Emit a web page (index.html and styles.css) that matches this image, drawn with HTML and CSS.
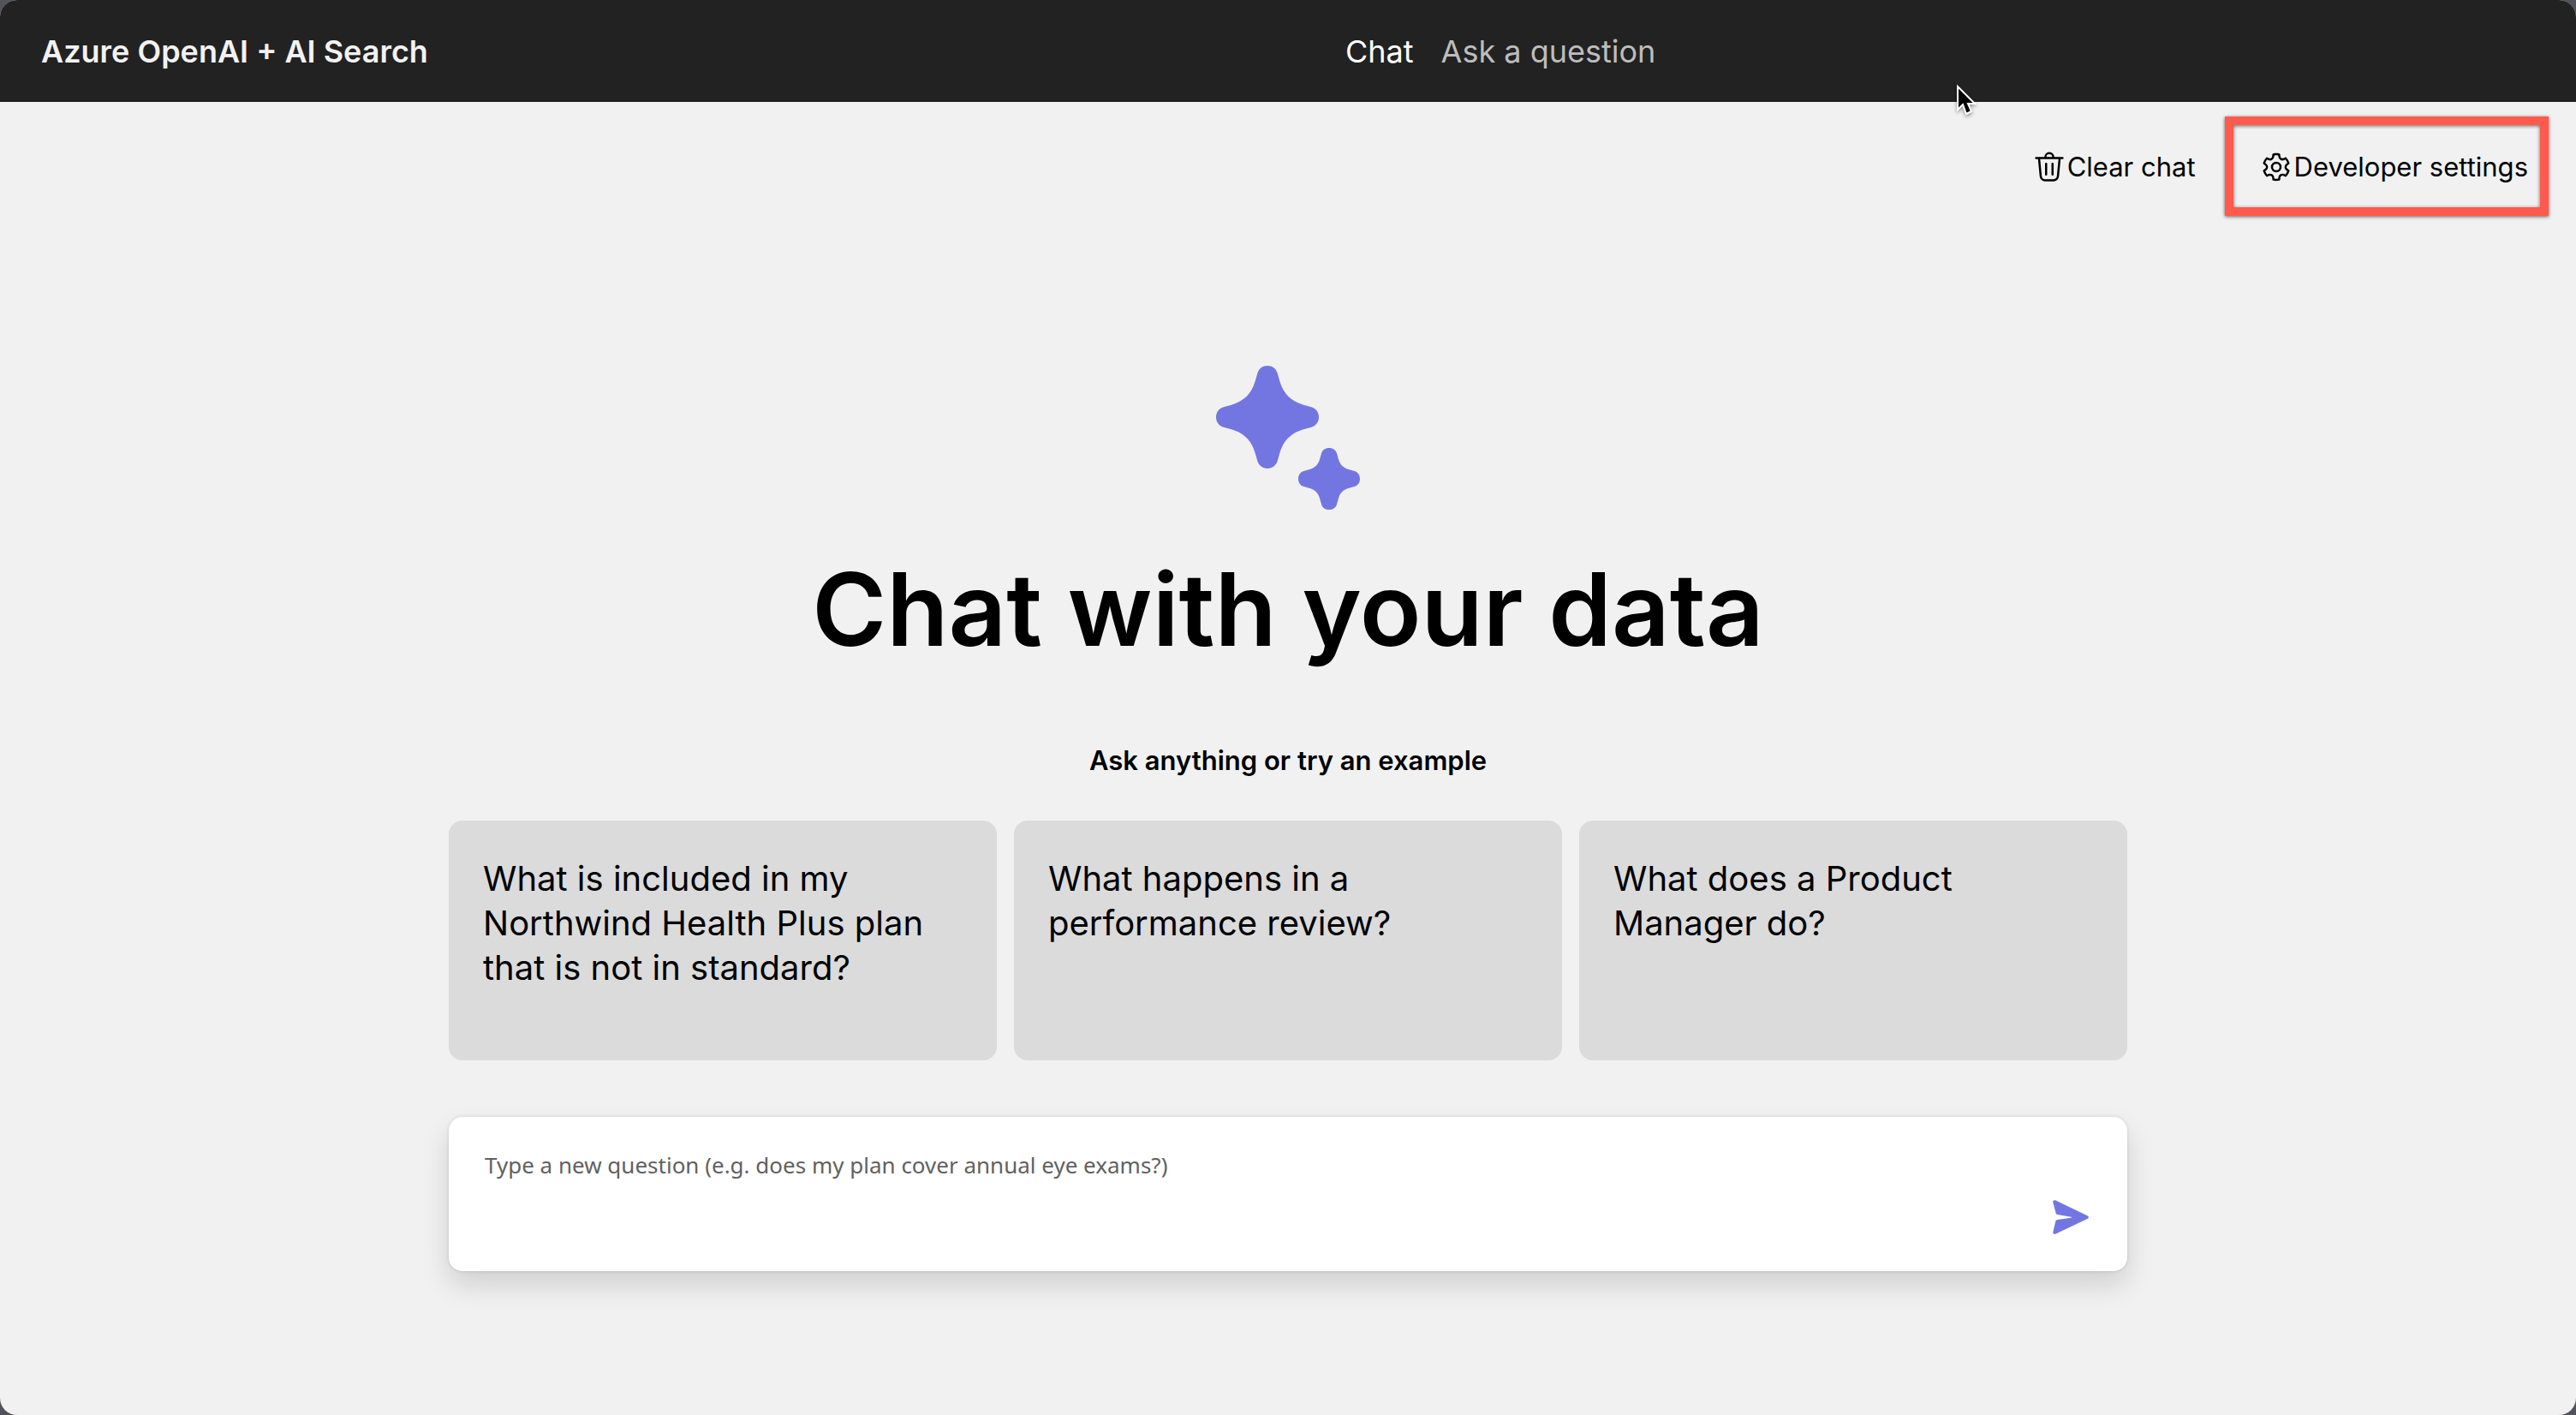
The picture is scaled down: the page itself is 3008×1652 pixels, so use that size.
FILE: index.html
```html
<!DOCTYPE html>
<html lang="en">
<head>
<meta charset="utf-8">
<meta name="viewport" content="width=device-width, initial-scale=1">
<title>Azure OpenAI + AI Search</title>
<link rel="stylesheet" href="styles.css">
</head>
<body>
<div class="window">
  <header class="header">
    <a class="header-title" href="#">Azure OpenAI + AI Search</a>
    <nav class="header-nav">
      <a class="nav-link nav-link-active" href="#chat">Chat</a>
      <a class="nav-link" href="#qa">Ask a question</a>
    </nav>
  </header>

  <div class="commands">
    <button class="command" type="button">
      <svg class="command-icon" viewBox="0 0 24 24" aria-hidden="true"><path d="M10 5h4a2 2 0 1 0-4 0ZM8.500 5a3.500 3.500 0 1 1 7 0h5.750a.75.75 0 0 1 0 1.500h-1.320l-1.170 12.110A3.750 3.750 0 0 1 15.030 22H8.970a3.750 3.750 0 0 1-3.730-3.390L4.070 6.500H2.750a.75.75 0 0 1 0-1.500H8.500Zm2 4.750a.75.75 0 0 0-1.500 0v7.500a.75.75 0 0 0 1.500 0v-7.500ZM14.250 9c.41 0 .75.34.75.75v7.500a.75.75 0 0 1-1.500 0v-7.500c0-.41.34-.75.75-.75Zm-7.520 9.470a2.250 2.250 0 0 0 2.240 2.030h6.060c1.150 0 2.120-.88 2.240-2.030L18.420 6.500H5.580l1.150 11.970Z"/></svg>
      <span>Clear chat</span>
    </button>
    <button class="command command-highlighted" type="button">
      <svg class="command-icon" viewBox="0 0 24 24" aria-hidden="true"><path d="M12.010 2.250c.74 0 1.470.1 2.180.25.3.07.53.33.56.65l.17 1.530a1.380 1.380 0 0 0 1.920 1.110l1.400-.61c.3-.13.64-.06.85.17a9.800 9.800 0 0 1 2.200 3.800c.1.3 0 .63-.26.82l-1.240.92a1.380 1.380 0 0 0 0 2.220l1.240.92c.26.19.36.52.27.82a9.800 9.800 0 0 1-2.200 3.800.75.75 0 0 1-.85.17l-1.400-.62a1.380 1.380 0 0 0-1.930 1.120l-.17 1.520a.75.75 0 0 1-.54.65 9.520 9.520 0 0 1-4.400 0 .75.75 0 0 1-.54-.65l-.17-1.520a1.380 1.380 0 0 0-1.930-1.110l-1.400.61a.75.75 0 0 1-.85-.17 9.800 9.800 0 0 1-2.200-3.800c-.1-.3 0-.63.26-.82l1.240-.92a1.380 1.380 0 0 0 0-2.220l-1.240-.92a.75.75 0 0 1-.27-.82 9.800 9.800 0 0 1 2.200-3.800.75.75 0 0 1 .85-.17l1.400.62a1.380 1.380 0 0 0 1.930-1.120l.17-1.530a.75.75 0 0 1 .56-.65c.7-.16 1.430-.24 2.190-.25Zm0 1.500c-.45 0-.9.04-1.350.12l-.11.97a2.890 2.890 0 0 1-4.030 2.330l-.9-.4A8.300 8.300 0 0 0 4.280 9.100l.8.59a2.880 2.880 0 0 1 0 4.640l-.8.59a8.300 8.300 0 0 0 1.350 2.330l.9-.4a2.880 2.880 0 0 1 4.020 2.330l.1.990c.9.15 1.800.15 2.700 0l.1-.99a2.880 2.880 0 0 1 4.020-2.320l.9.4a8.300 8.300 0 0 0 1.350-2.340l-.8-.59a2.880 2.880 0 0 1 0-4.640l.8-.59a8.300 8.300 0 0 0-1.350-2.330l-.9.4a2.880 2.880 0 0 1-4.020-2.330l-.1-.98c-.45-.07-.9-.11-1.340-.11ZM12 8.250a3.750 3.750 0 1 1 0 7.500 3.750 3.750 0 0 1 0-7.500Zm0 1.500a2.250 2.250 0 1 0 0 4.500 2.250 2.250 0 0 0 0-4.500Z"/></svg>
      <span>Developer settings</span>
    </button>
  </div>

  <main class="chat">
    <svg class="sparkle" viewBox="0 0 504 504" aria-hidden="true">
      <path transform="translate(180 180)" d="M0-180C17-180 30-170 35-154L43-126C56-82 82-56 126-43L154-35C170-30 180-17 180 0S170 30 154 35L126 43C82 56 56 82 43 126L35 154C30 170 17 180 0 180S-30 170-35 154L-43 126C-56 82-82 56-126 43L-154 35C-170 30-180 17-180 0S-170-30-154-35L-126-43C-82-56-56-82-43-126L-35-154C-30-170-17-180 0-180Z"/>
      <path transform="translate(396 396)" d="M0-108C13-108 24-101 27-89L33-68C38-50 50-38 68-33L89-27C101-24 108-13 108 0S101 24 89 27L68 33C50 38 38 50 33 68L27 89C24 101 13 108 0 108S-24 101-27 89L-33 68C-38 50-50 38-68 33L-89 27C-101 24-108 13-108 0S-101-24-89-27L-68-33C-50-38-38-50-33-68L-27-89C-24-101-13-108 0-108Z"/>
    </svg>
    <h1 class="chat-title">Chat with your data</h1>
    <h2 class="chat-subtitle">Ask anything or try an example</h2>

    <ul class="examples">
      <li class="example-item"><button class="example" type="button">What is included in my Northwind Health Plus plan that is not in standard?</button></li>
      <li class="example-item"><button class="example" type="button">What happens in a performance review?</button></li>
      <li class="example-item"><button class="example" type="button">What does a Product Manager do?</button></li>
    </ul>

    <form class="question">
      <textarea class="question-input" aria-label="Question" placeholder="Type a new question (e.g. does my plan cover annual eye exams?)"></textarea>
      <button class="question-send" type="button" aria-label="Ask question">
        <svg class="send-icon" viewBox="0 0 126 120" aria-hidden="true"><path d="M1 9C-1 3 4-1 9 1L121 55C127 58 127 63 121 66L9 119C4 121 0 117 1 112L10 74C11 71 13 70 16 69L64 62Q69 60 64 59L16 51C13 51 11 49 11 46Z"/></svg>
      </button>
    </form>
  </main>

  <svg class="cursor" viewBox="0 0 24 40" aria-hidden="true"><path d="M1 3V30L7 24L11 35L17 32L13 23H21Z"/></svg>
</div>
</body>
</html>
```
FILE: styles.css
```css
* {
  box-sizing: border-box;
}

body {
  margin: 0;
  background: #50535a;
  color: #000;
  font-family: Inter, "Liberation Sans", sans-serif;
}

button {
  margin: 0;
  border: 0;
  padding: 0;
  background: none;
  color: inherit;
  font: inherit;
  cursor: pointer;
}

.window {
  position: relative;
  display: flex;
  flex-direction: column;
  min-height: 100vh;
  border-radius: 20px;
  background: #f1f1f1;
  overflow: hidden;
}

/* Header */

.header {
  display: grid;
  grid-template-columns: 1fr 1fr;
  align-items: center;
  padding: 36px 48px 35px;
  background: #222;
  color: #f2f2f2;
  line-height: 48px;
}

.header-title {
  color: inherit;
  font-size: 36px;
  font-weight: 600;
  text-decoration: none;
}

.header-nav {
  display: flex;
  gap: 32px;
  padding-left: 67px;
  font-size: 36px;
}

.nav-link {
  color: #bdbdbd;
  text-decoration: none;
}

.nav-link-active {
  color: #fff;
}

/* Command bar */

.commands {
  display: flex;
  justify-content: flex-end;
  align-items: center;
  gap: 34px;
  padding: 17px 32px 0;
  font-size: 31px;
  line-height: 40px;
}

.command {
  display: flex;
  align-items: center;
  gap: 1px;
  padding-top: 2px;
}

.command-highlighted {
  border: 10px solid #ff5a4c;
  padding: 29px 14px 27px 30px;
  box-shadow: 0 1px 4px #0009, inset 0 1px 4px #0009;
}

.command-icon {
  width: 40px;
  height: 40px;
}

/* Chat start page */

.chat {
  display: flex;
  flex-direction: column;
  align-items: center;
  width: 100%;
  max-width: 2056px;
  margin: 0 auto;
  padding: 175px 48px 168px;
}

.sparkle {
  width: 168px;
  height: 168px;
  fill: #7376e1;
}

.chat-title {
  margin: 36px 0 0;
  font-size: 118px;
  font-weight: 600;
  line-height: 160px;
}

.chat-subtitle {
  margin: 77px 0 0;
  font-size: 31px;
  font-weight: 600;
  line-height: 40px;
}

.examples {
  display: grid;
  grid-template-columns: repeat(3, 1fr);
  gap: 20px;
  width: 100%;
  margin: 50px 0 0;
  padding: 0;
  list-style: none;
}

.example-item {
  display: flex;
}

.example {
  display: flex;
  align-items: flex-start;
  width: 100%;
  min-height: 280px;
  border-radius: 16px;
  padding: 42px 40px;
  background: #dbdbdb;
  font-size: 40px;
  line-height: 52px;
  text-align: left;
}

.question {
  display: flex;
  width: 100%;
  min-height: 180px;
  margin-top: 66px;
  border-radius: 16px;
  padding: 36px 37px 35px 42px;
  background: #fff;
  box-shadow: 0 16px 32px #00000024, 0 0 4px #0000001f;
}

.question-input {
  flex: 1;
  border: 0;
  padding: 0;
  background: none;
  color: #000;
  font-family: "Noto Sans", "Open Sans", sans-serif;
  font-size: 26px;
  line-height: 40px;
  resize: none;
  outline: none;
}

.question-input::placeholder {
  color: #616161;
  opacity: 1;
}

.question-send {
  align-self: flex-end;
  padding: 8px;
}

.send-icon {
  display: block;
  width: 42px;
  height: 40px;
  fill: #7376e1;
}

/* Mouse pointer */

.cursor {
  position: absolute;
  top: 98px;
  left: 2285px;
  width: 24px;
  height: 40px;
  fill: #000;
  stroke: #fff;
  stroke-width: 2px;
  filter: drop-shadow(0 2px 2px #0006);
  overflow: visible;
  pointer-events: none;
}
```
